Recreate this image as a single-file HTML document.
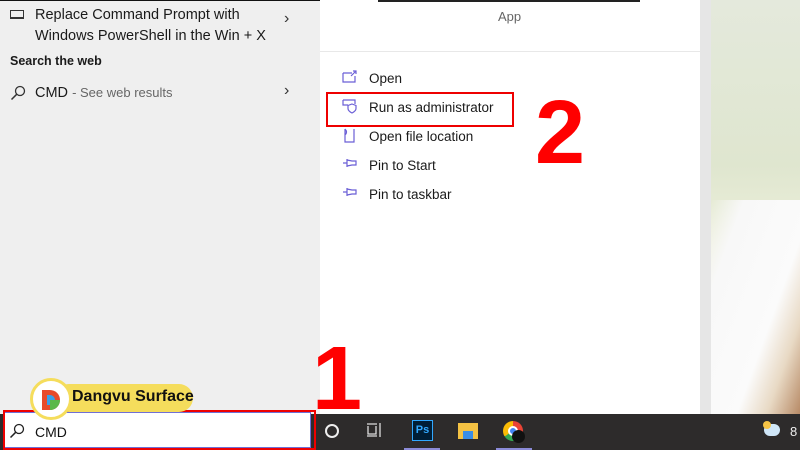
<!DOCTYPE html>
<html><head><meta charset="utf-8"><style>
*{margin:0;padding:0;box-sizing:border-box}
body{width:800px;height:450px;overflow:hidden;position:relative;font-family:"Liberation Sans",sans-serif;background:#fff}
.a{position:absolute}
.t{font-size:13.5px;color:#1a1a1a;white-space:nowrap}
</style></head><body>
<div class="a" style="left:0;top:0;width:320px;height:414px;background:#efefef;border-top:1px solid #111"></div>
<div class="a" style="left:320px;top:0;width:380px;height:414px;background:#fff"></div>
<div class="a" style="left:378px;top:0;width:262px;height:2px;background:#222"></div>
<div class="a" style="left:700px;top:0;width:11px;height:414px;background:#e6e6e6"></div>
<div class="a" style="left:711px;top:0;width:89px;height:414px;background:linear-gradient(180deg,#e4e9dc 0%,#dfe6cf 40%,#eef0dc 60%,#f5f3e8 100%)"></div>
<div class="a" style="left:711px;top:200px;width:89px;height:214px;background:linear-gradient(110deg,rgba(250,250,250,0) 0%,#f8f8f8 20%,#fbfbfb 62%,#e8d9c4 80%,#b78a66 100%)"></div>

<!-- left list -->
<svg class="a" style="left:10px;top:10px" width="14" height="10"><rect x="0.5" y="0.5" width="13" height="7" fill="none" stroke="#333"/><rect x="0" y="7" width="14" height="2" fill="#333"/></svg>
<div class="a t" style="left:35px;top:5px;font-size:14.5px;line-height:21px">Replace Command Prompt with<br>Windows PowerShell in the Win + X</div>
<div class="a" style="left:284px;top:10px;font-size:16px;color:#333">›</div>
<div class="a t" style="left:10px;top:54px;font-size:12.5px;font-weight:bold">Search the web</div>
<svg class="a" style="left:10px;top:85px" width="16" height="16"><circle cx="10" cy="6" r="4.5" fill="none" stroke="#333" stroke-width="1.3"/><line x1="6.8" y1="9.2" x2="1.5" y2="14.5" stroke="#333" stroke-width="1.5"/></svg>
<div class="a t" style="left:35px;top:85px;font-size:14.5px">CMD <span style="color:#666;font-size:13px">- See web results</span></div>
<div class="a" style="left:284px;top:82px;font-size:16px;color:#333">›</div>

<!-- right menu -->
<div class="a" style="left:498px;top:9px;font-size:13px;color:#666">App</div>
<div class="a" style="left:320px;top:51px;width:380px;height:1px;background:#e8e8e8"></div>
<svg class="a" style="left:342px;top:70px" width="16" height="14"><path d="M1 3h9M1 3v9h12v-6M9 6l5-5M11 1h3v3" fill="none" stroke="#6b5fd6" stroke-width="1.2"/></svg>
<div class="a t" style="left:369px;top:71px">Open</div>
<svg class="a" style="left:342px;top:98px" width="16" height="16"><path d="M1 2h12v4M1 2v5h5" fill="none" stroke="#6b5fd6" stroke-width="1.2"/><path d="M10 6l4 1.5v3c0 2-2 3.5-4 4.5c-2-1-4-2.5-4-4.5v-3z" fill="none" stroke="#6b5fd6" stroke-width="1.2"/></svg>
<div class="a t" style="left:369px;top:100px">Run as administrator</div>
<div class="a" style="left:326px;top:92px;width:188px;height:35px;border:2px solid #e00"></div>
<svg class="a" style="left:344px;top:128px" width="12" height="16"><path d="M1 1v13h9V1M1 1c2 2 2 4 0 6" fill="none" stroke="#6b5fd6" stroke-width="1.2"/></svg>
<div class="a t" style="left:369px;top:129px">Open file location</div>
<svg class="a" style="left:342px;top:157px" width="16" height="12"><path d="M1 6h4M5 2v8M5 3l5 1h4v4h-4l-5 1" fill="none" stroke="#6b5fd6" stroke-width="1.2"/></svg>
<div class="a t" style="left:369px;top:158px">Pin to Start</div>
<svg class="a" style="left:342px;top:186px" width="16" height="12"><path d="M1 6h4M5 2v8M5 3l5 1h4v4h-4l-5 1" fill="none" stroke="#6b5fd6" stroke-width="1.2"/></svg>
<div class="a t" style="left:369px;top:187px">Pin to taskbar</div>
<div class="a" style="left:535px;top:88px;font-size:90px;font-weight:bold;color:#f00;line-height:90px">2</div>
<div class="a" style="left:312px;top:334px;font-size:90px;font-weight:bold;color:#f00;line-height:90px">1</div>

<!-- taskbar -->
<div class="a" style="left:0;top:414px;width:800px;height:36px;background:#2d2b2b"></div>
<div class="a" style="left:3px;top:412px;width:308px;height:36px;background:#fff;border:1px solid #6f6fd6"></div>
<div class="a" style="left:3px;top:410px;width:313px;height:40px;border:2px solid #e00"></div>
<svg class="a" style="left:9px;top:423px" width="16" height="16"><circle cx="10" cy="6" r="4.5" fill="none" stroke="#222" stroke-width="1.3"/><line x1="6.8" y1="9.2" x2="1.5" y2="14.5" stroke="#222" stroke-width="1.5"/></svg>
<div class="a t" style="left:35px;top:424px;font-size:14px;color:#111">CMD</div>
<div class="a" style="left:325px;top:424px;width:14px;height:14px;border:2px solid #eee;border-radius:50%"></div>
<svg class="a" style="left:366px;top:422px" width="18" height="16"><path d="M1 2h10M1 14h10M2 4v8h8V4M14 1v14" fill="none" stroke="#ddd" stroke-width="1.3"/></svg>
<div class="a" style="left:412px;top:420px;width:21px;height:21px;background:#001e36;border:1.5px solid #31a8ff;color:#31a8ff;font-size:11px;font-weight:bold;text-align:center;line-height:18px">Ps</div>
<div class="a" style="left:404px;top:448px;width:36px;height:2px;background:#8b8bd8"></div>
<div class="a" style="left:458px;top:423px;width:20px;height:16px;background:#f4c243"></div>
<div class="a" style="left:463px;top:431px;width:10px;height:8px;background:#3a8ee6"></div>
<div class="a" style="left:503px;top:421px;width:20px;height:20px;border-radius:50%;background:conic-gradient(#ea4335 0 33%,#34a853 0 66%,#fbbc05 0)"></div>
<div class="a" style="left:508px;top:426px;width:10px;height:10px;border-radius:50%;background:#4285f4;border:2px solid #fff"></div>
<div class="a" style="left:512px;top:430px;width:13px;height:13px;border-radius:50%;background:#111"></div>
<div class="a" style="left:496px;top:448px;width:36px;height:2px;background:#8b8bd8"></div>
<div class="a" style="left:764px;top:424px;width:16px;height:12px;border-radius:7px;background:#cfe6f7"></div>
<div class="a" style="left:763px;top:421px;width:8px;height:8px;border-radius:50%;background:#f6c445"></div>
<div class="a" style="left:790px;top:424px;font-size:13px;color:#eee">8</div>

<!-- logo -->
<div class="a" style="left:55px;top:384px;width:138px;height:28px;border-radius:14px;background:#f5dd5c"></div>
<div class="a" style="left:30px;top:378px;width:42px;height:42px;border-radius:50%;background:#fff;border:3px solid #f5dd5c"></div>
<svg class="a" style="left:40px;top:388px" width="22" height="24"><path d="M2 2h8a10 10 0 0 1 0 20H2z" fill="#e84a2b"/><path d="M7 7h3a5 5 0 0 1 0 10H7z" fill="#3aa0e8"/><path d="M10 12l10 0a10 10 0 0 1-10 10z" fill="#5bb84a"/></svg>
<div class="a" style="left:72px;top:388px;font-size:16px;font-weight:bold;color:#111">Dangvu Surface</div>
</body></html>
